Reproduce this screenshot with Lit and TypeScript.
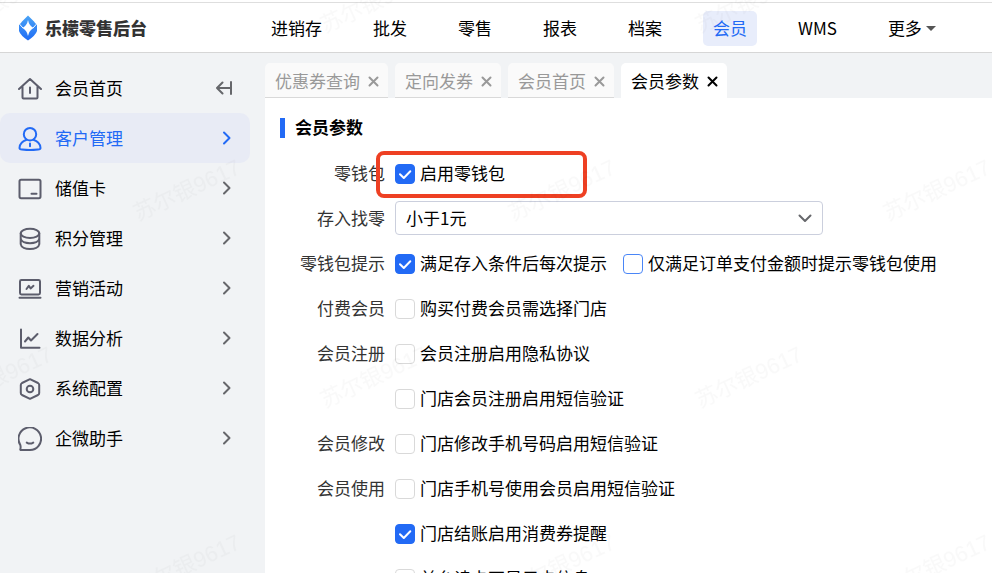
import { LitElement, html, svg, css, nothing } from "lit";
import { customElement } from "lit/decorators.js";
import { classMap } from "lit/directives/class-map.js";

const topNav = ["进销存", "批发", "零售", "报表", "档案", "会员", "WMS"];

const icons = {
  home: svg`<path d="M1 12 L12 2 L23 12 M4.500 9.500 V20.500 Q4.500 21.500 5.500 21.500 H18.500 Q19.500 21.500 19.500 20.500 V9.500 M12 10.500 V16"/>`,
  user: svg`<circle cx="12" cy="7.2" r="6.2"/><path d="M8.5 12.8 C4 14.5 1.5 18 1.5 21 Q1.5 22.4 4 22.6 Q12 23.6 20 22.6 Q22.5 22.4 22.5 21 C22.5 18 20 14.5 15.5 12.8 M12 16.500 V19.300"/>`,
  card: svg`<rect x="1.5" y="2.7" width="21" height="18.5" rx="1.6"/><path d="M13.5 16.8 H18.5"/>`,
  coins: svg`<ellipse cx="12" cy="6.3" rx="9.3" ry="4.6"/><path d="M2.7 6.3 V11.500 C3.5 17.800 20.5 17.800 21.3 11.500 V6.3 M2.7 11.5 V17.2 C3.5 23.6 20.5 23.6 21.3 17.2 V11.5"/>`,
  laptop: svg`<rect x="2" y="3" width="20" height="14.500" rx="1.4"/><path d="M1.5 20.8 H22.5 M8.5 12 L10.8 8.8 L12.6 11.4 L15.5 8.8"/>`,
  chart: svg`<path d="M3 2.5 V20.8 H21.5 M7 14.5 L10.300 10.500 L13 13.5 L19.5 7"/>`,
  hexagon: svg`<path d="M12 2.2 L20 6 Q21.2 6.7 21.2 8 V16 Q21.2 17.3 20 18 L12 21.8 L4 18 Q2.8 17.3 2.8 16 V8 Q2.8 6.7 4 6 Z"/><circle cx="12" cy="12" r="3.3"/>`,
  chat: svg`<path d="M3 23 H12 A11.3 11.3 0 1 0 2.2 17.7 Q3 20 2.3 22.2 Q2.2 23 3 23 Z M8.8 15.6 Q12 17.600 15.2 15.6"/>`,
};

const menu = [
  { label: "会员首页", icon: icons.home, home: true, active: false },
  { label: "客户管理", icon: icons.user, home: false, active: true },
  { label: "储值卡", icon: icons.card, home: false, active: false },
  { label: "积分管理", icon: icons.coins, home: false, active: false },
  { label: "营销活动", icon: icons.laptop, home: false, active: false },
  { label: "数据分析", icon: icons.chart, home: false, active: false },
  { label: "系统配置", icon: icons.hexagon, home: false, active: false },
  { label: "企微助手", icon: icons.chat, home: false, active: false },
];

const tabs = ["优惠券查询", "定向发券", "会员首页", "会员参数"];

interface Option {
  text: string;
  checked?: boolean;
  hover?: boolean;
}

const rows: { label: string; options: Option[] }[] = [
  {
    label: "零钱包提示",
    options: [
      { text: "满足存入条件后每次提示", checked: true },
      { text: "仅满足订单支付金额时提示零钱包使用", hover: true },
    ],
  },
  { label: "付费会员", options: [{ text: "购买付费会员需选择门店" }] },
  { label: "会员注册", options: [{ text: "会员注册启用隐私协议" }] },
  { label: "", options: [{ text: "门店会员注册启用短信验证" }] },
  { label: "会员修改", options: [{ text: "门店修改手机号码启用短信验证" }] },
  { label: "会员使用", options: [{ text: "门店手机号使用会员启用短信验证" }] },
  { label: "", options: [{ text: "门店结账启用消费券提醒", checked: true }] },
  { label: "", options: [{ text: "前台读卡不显示卡信息" }] },
];

@customElement("app-root")
export class AppRoot extends LitElement {
  static styles = css`
    :host {
      display: flex;
      flex-direction: column;
      position: relative;
      height: 100vh;
      overflow: hidden;
      background: #f1f3f5;
      color: #000;
      font: 17px/24px "Noto Sans CJK SC", sans-serif;
    }
    * {
      box-sizing: border-box;
    }
    a {
      color: inherit;
      text-decoration: none;
    }
    button {
      padding: 0;
      border: 0;
      background: none;
      color: inherit;
      font: inherit;
      cursor: pointer;
    }
    svg {
      display: block;
      flex: none;
    }
    .line {
      fill: none;
      stroke: currentColor;
      stroke-width: 2;
      stroke-linecap: round;
      stroke-linejoin: round;
    }
    .header {
      display: flex;
      align-items: center;
      flex: none;
      height: 53px;
      padding: 4px 0 0;
      background: #fff;
      border-bottom: 1px solid #d6d6d6;
      box-shadow: inset 0 2px #fff, inset 0 3px #dedede;
    }
    .brand {
      display: flex;
      align-items: center;
      gap: 7px;
      width: 261px;
      padding-left: 18px;
      color: #333;
      font-weight: 900;
    }
    .nav {
      display: flex;
      gap: 31px;
    }
    .nav-item {
      display: flex;
      align-items: center;
      height: 35px;
      padding: 0 10px;
      border-radius: 5px;
      white-space: nowrap;
    }
    .nav-item.active {
      background: #e8edfb;
      color: #226af5;
    }
    .more {
      gap: 4px;
    }
    .caret {
      border: 5px solid transparent;
      border-top-color: #555;
      border-bottom: 0;
    }
    .body {
      display: flex;
      flex: 1;
      min-height: 0;
    }
    .sidebar {
      flex: none;
      width: 250px;
      margin-right: 15px;
      padding-top: 10px;
    }
    .menu-item {
      display: flex;
      align-items: center;
      gap: 13px;
      height: 50px;
      padding: 0 16px 0 18px;
      border-radius: 10px;
    }
    .menu-item.active {
      background: #e8ebf5;
      color: #226af5;
    }
    .menu-label {
      flex: 1;
    }
    .menu-icon {
      margin-top: 2px;
      color: #5c5d6c;
    }
    .chevron {
      color: #66676b;
    }
    .active .menu-icon,
    .active .chevron {
      color: #226af5;
    }
    .main {
      display: flex;
      flex-direction: column;
      flex: 1;
      min-width: 0;
    }
    .tabs {
      display: flex;
      flex: none;
      gap: 7px;
      height: 45px;
      padding-top: 10px;
    }
    .tab {
      display: flex;
      align-items: center;
      gap: 8px;
      padding: 2px 9px 0 10px;
      border-bottom: 1px solid #d9d9d9;
      border-radius: 5px 5px 0 0;
      background: #fafafa;
      color: #999;
      white-space: nowrap;
    }
    .tab.active {
      border-color: #fff;
      background: #fff;
      color: #000;
    }
    .panel {
      flex: 1;
      min-height: 0;
      padding: 20px 15px 0;
      background: #fff;
    }
    .title {
      margin: 0 0 12px;
      padding: 0 0 2px 10px;
      border-left: 5px solid #226af5;
      font-size: 17px;
      line-height: 18px;
      font-weight: 700;
    }
    .row {
      display: flex;
      align-items: center;
      gap: 10px;
      position: relative;
      height: 45px;
      white-space: nowrap;
    }
    .row-label {
      width: 105px;
      flex: none;
      text-align: right;
      color: #333;
    }
    .options {
      display: flex;
      gap: 16px;
    }
    .option {
      display: flex;
      align-items: center;
      gap: 5px;
    }
    .check {
      display: grid;
      padding-top: 2px;
    }
    .check > * {
      grid-area: 1 / 1;
    }
    .box {
      appearance: none;
      width: 20px;
      height: 20px;
      margin: 0;
      border: 1px solid #d9d9d9;
      border-radius: 4px;
      background: #fff;
    }
    .box.hover {
      border-color: #4a86f7;
    }
    .box:checked {
      border-color: #226af5;
      background: #226af5;
    }
    .tick {
      color: #fff;
      pointer-events: none;
      visibility: hidden;
    }
    .box:checked + .tick {
      visibility: visible;
    }
    .select-wrap {
      display: grid;
      align-items: center;
      flex: 0 1 428px;
    }
    .select-wrap > * {
      grid-area: 1 / 1;
    }
    .select {
      appearance: none;
      width: 100%;
      height: 34px;
      padding: 0 10px;
      border: 1px solid #cbcfdd;
      border-radius: 4px;
      background: #fff;
      color: #000;
      font: inherit;
    }
    .arrow {
      justify-self: end;
      margin-right: 11px;
      color: #66676b;
      pointer-events: none;
    }
    .highlight {
      position: absolute;
      left: 96px;
      top: 1px;
      width: 211px;
      height: 47px;
      border: 4px solid #ee4023;
      border-radius: 8px;
      pointer-events: none;
    }
    .watermark {
      position: absolute;
      inset: 0;
      width: 100%;
      height: 100%;
      pointer-events: none;
    }
    .mark {
      fill: #000;
      fill-opacity: 0.025;
      font: 22px "Liberation Sans", "Noto Sans CJK SC", sans-serif;
      text-anchor: middle;
    }
  `;

  private option(o: Option) {
    return html`<label class="option">
      <span class="check">
        <input type="checkbox" class=${classMap({ box: true, hover: !!o.hover })} .checked=${!!o.checked} />
        <svg class="line tick" width="20" height="20" viewBox="0 0 20 20"><path d="M5 10.3 L8.8 14 L15.3 7.2" /></svg>
      </span>
      <span>${o.text}</span>
    </label>`;
  }

  private menuEnd(home: boolean) {
    return home
      ? html`<svg class="line chevron" width="18" height="18" viewBox="0 0 18 18">
          <path d="M15 3 V15 M14 9 H1 M6.500 3.500 L1 9 L6.500 14.500" />
        </svg>`
      : html`<svg class="line chevron" width="16" height="16" viewBox="0 0 16 16"><path d="M6 2.5 L11.5 8 L6 13.5" /></svg>`;
  }

  render() {
    return html`
      <header class="header">
        <div class="brand">
          <svg width="20" height="26" viewBox="0 0 20 26">
            <defs>
              <linearGradient id="blue" x1="0" y1="0" x2="0" y2="1">
                <stop offset="0" stop-color="#4aa3f5" />
                <stop offset="1" stop-color="#1f6cf5" />
              </linearGradient>
            </defs>
            <path
              fill="url(#blue)"
              d="M10 0.5 L16 6.500 Q17 8.500 19 9.500 V16 Q17.5 20.5 10 25.5 Q2.5 20.5 1 16 V9.500 Q3 8.500 4 6.500 Z"
            />
            <path fill="#fff" d="M10 5 Q11 10.500 15.500 13 Q11 15.500 10 21 Q9 15.500 4.500 13 Q9 10.500 10 5 Z" />
            <path fill="none" stroke="#fff" stroke-width="1" d="M0.500 8 L5 13 M19.500 8 L15 13" />
          </svg>
          <span>乐檬零售后台</span>
        </div>
        <nav class="nav">
          ${topNav.map(
            (n) => html`<a href="#" class=${classMap({ "nav-item": true, active: n === "会员" })}>${n}</a>`
          )}
          <button class="nav-item more">更多<span class="caret"></span></button>
        </nav>
      </header>
      <div class="body">
        <nav class="sidebar">
          ${menu.map(
            (m) => html`<a href="#" class=${classMap({ "menu-item": true, active: m.active })}>
              <svg class="line menu-icon" width="24" height="24" viewBox="0 0 24 24">${m.icon}</svg>
              <span class="menu-label">${m.label}</span>
              ${this.menuEnd(m.home)}
            </a>`
          )}
        </nav>
        <main class="main">
          <div class="tabs">
            ${tabs.map(
              (t, i) => html`<div class=${classMap({ tab: true, active: i === 3 })}>
                <a href="#">${t}</a>
                <button aria-label="关闭${t}">
                  <svg class="line" width="11" height="11" viewBox="0 0 11 11"><path d="M1.500 1.500 L9.500 9.500 M9.500 1.500 L1.500 9.500" /></svg>
                </button>
              </div>`
            )}
          </div>
          <section class="panel">
            <h2 class="title">会员参数</h2>
            <div class="row">
              <span class="row-label">零钱包</span>
              ${this.option({ text: "启用零钱包", checked: true })}
              <div class="highlight"></div>
            </div>
            <div class="row">
              <label class="row-label" for="change">存入找零</label>
              <div class="select-wrap">
                <select class="select" id="change">
                  <option>小于1元</option>
                </select>
                <svg class="line arrow" width="14" height="14" viewBox="0 0 14 14"><path d="M1.500 4.500 L7 10 L12.500 4.500" /></svg>
              </div>
            </div>
            ${rows.map(
              (r) => html`<div class="row">
                <span class="row-label">${r.label || nothing}</span>
                <div class="options">${r.options.map((o) => this.option(o))}</div>
              </div>`
            )}
          </section>
        </main>
      </div>
      <svg class="watermark" aria-hidden="true">
        <defs>
          <pattern id="marks" x="93" y="96" width="375" height="375" patternUnits="userSpaceOnUse">
            <text class="mark" transform="translate(97 101) rotate(-25)">苏尔银9617</text>
            <text class="mark" transform="translate(284 288) rotate(-25)">苏尔银9617</text>
          </pattern>
        </defs>
        <rect width="100%" height="100%" fill="url(#marks)" />
      </svg>
    `;
  }
}
